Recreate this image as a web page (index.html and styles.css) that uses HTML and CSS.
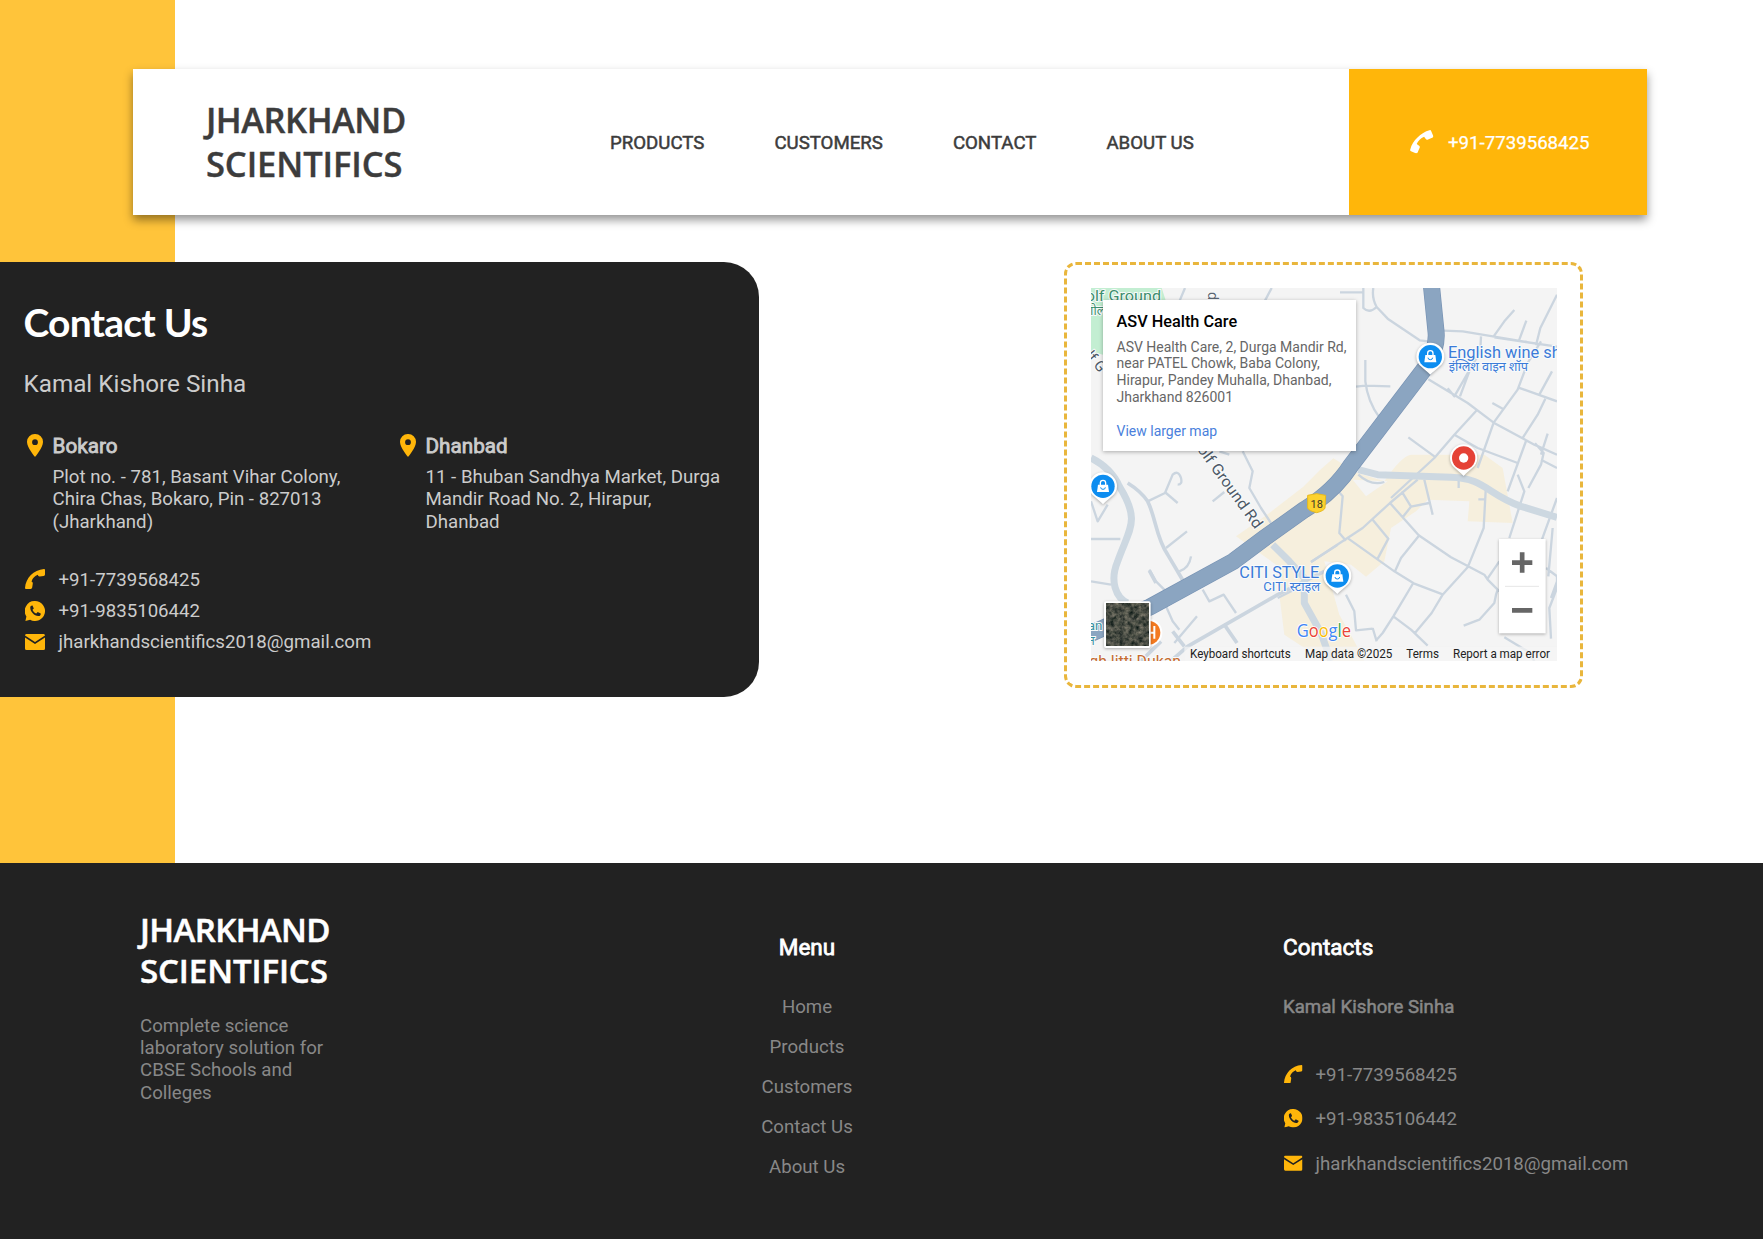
FILE: index.html
```html
<!DOCTYPE html>
<html lang="en">
<head>
<meta charset="utf-8">
<title>Jharkhand Scientifics - Contact Us</title>
<link rel="stylesheet" href="styles.css">
</head>
<body>
<svg class="sprite" aria-hidden="true">
  <symbol id="i-phone" viewBox="0 0 20 20"><path d="M20 .8V5.400Q20 6.800 18.600 7L14.600 7.500Q13 7.500 12.800 5.800C10 6.800 7.600 9 6.500 12.500Q8 12.800 7.800 14.600L7.200 18.600Q7 20 5.600 20H1Q0 20 0 19C.8 9 8.500.800 19 0Q20 0 20 .8Z"/></symbol>
  <symbol id="i-handset" viewBox="0 0 70 70"><path d="M58 1Q61-1 63 3L69 17Q71 21 66 23L52 29Q49 30 47 27L42 20C32 24 24 32 20 42L27 47Q30 49 29 52L23 66Q21 71 17 69L3 63Q-1 61 1 57C7 33 33 7 58 1Z"/></symbol>
  <symbol id="i-wa" viewBox="0 0 20 20"><path fill-rule="evenodd" d="M10 0a10 10 0 1 1-4.900 18.700L.4 20l1-4.500A10 10 0 0 1 10 0ZM5.300 6.200C4.800 10.500 9.500 15.400 13.700 15c1.300-.1 2.200-1.400 2-2.400l-3-1.500-1.400 1.500C9.500 11.900 8.100 10.500 7.500 8.800L8.800 7.500 7.500 4.600C6.500 4.300 5.400 5.200 5.300 6.200Z"/></symbol>
  <symbol id="i-mail" viewBox="0 0 20 16"><path d="M1.300 0H18.700Q20 0 20 1.600L10 8 0 1.600Q0 0 1.300 0ZM0 3.600 10 10 20 3.600V14.500Q20 16 18.500 16H1.500Q0 16 0 14.500Z"/></symbol>
  <symbol id="i-pin" viewBox="0 0 16 23"><path fill-rule="evenodd" d="M8 0a7.900 7.900 0 0 1 8 8c0 5.500-8 15-8 15S0 13.500 0 8a7.900 7.900 0 0 1 8-8Zm0 5.300a2.900 2.900 0 1 0 0 5.800 2.900 2.900 0 0 0 0-5.800Z"/></symbol>
</svg>

<div class="page">
  <header class="nav">
    <a class="nav-logo brand">JHARKHAND<br><span>SCIENTIFICS</span></a>
    <nav class="nav-links">
      <a>PRODUCTS</a><a>CUSTOMERS</a><a>CONTACT</a><a>ABOUT US</a>
    </nav>
    <a class="nav-call"><svg><use href="#i-handset"/></svg><span>+91-7739568425</span></a>
  </header>

  <main class="main">
    <section class="panel">
      <h1>Contact Us</h1>
      <p class="person">Kamal Kishore Sinha</p>
      <div class="offices">
        <div class="office">
          <svg><use href="#i-pin"/></svg>
          <div><h2>Bokaro</h2><p>Plot no. - 781, Basant Vihar Colony,<br>Chira Chas, Bokaro, Pin - 827013<br>(Jharkhand)</p></div>
        </div>
        <div class="office">
          <svg><use href="#i-pin"/></svg>
          <div><h2>Dhanbad</h2><p>11 - Bhuban Sandhya Market, Durga<br>Mandir Road No. 2, Hirapur,<br>Dhanbad</p></div>
        </div>
      </div>
      <ul class="reach">
        <li><svg><use href="#i-phone"/></svg><span>+91-7739568425</span></li>
        <li><svg><use href="#i-wa"/></svg><span>+91-9835106442</span></li>
        <li><svg><use href="#i-mail"/></svg><span>jharkhandscientifics2018@gmail.com</span></li>
      </ul>
    </section>

    <section class="map-frame">
      <div class="map">
        <svg class="tiles" viewBox="0 0 1398 1119">
          <defs>
            <filter id="sat" x="0" y="0" width="1" height="1" color-interpolation-filters="sRGB">
              <feTurbulence type="fractalNoise" baseFrequency=".07" numOctaves="4" seed="8"/>
              <feColorMatrix values=".6 .25 0 0 -.14  .52 .2 0 0 -.06  .45 .2 0 0 -.06  0 0 0 0 1"/>
            </filter>
            <g id="shop">
              <path fill="#fff" d="M0-42a42 42 0 0 1 42 42c0 27-25 34-42 54C-17 34-42 27-42 0A42 42 0 0 1 0-42Z" class="lift"/>
              <circle r="35" fill="#0d8df0"/>
              <path fill="#fff" d="M-15-5H15L18 17H-18Z"/>
              <path fill="none" stroke="#fff" stroke-width="4" d="M-8-4V-10a8 8 0 0 1 16 0V-4"/>
              <path fill="none" stroke="#0d8df0" stroke-width="3" d="M-7 3a7 6 0 0 0 14 0"/>
            </g>
          </defs>
          <rect width="1398" height="1119" fill="#f4f4f4"/>
          <path fill="#c3eed2" d="M0 0H212L225 40 36 130V200L0 190Z"/>
          <g fill="#f6efdd">
            <path d="M435 745 527 681 637 596 687 546 727 511 800 555 880 580Q930 505 960 500H1180L1235 540 1265 705 1130 700 1135 640 1010 635 975 670 900 720 880 820 825 866 780 830 700 820 745 980 790 1060 820 1119H700L580 1040 565 920 575 850 555 830Z"/>
          </g>
          <path fill="#f4f4f4" d="M785 575 890 580 825 625Z"/>
          <g class="road">
            <!-- north east -->
            <path d="M282 0 266 38M542 0 522 38M747 13H817M817 0V60Q835 78 857 57Q842 30 847 0M857 57 890 92 986 157 1012 160M1058 128 1115 130 1308 162M1210 148 1398 176M1398 20 1348 120 1335 172M1208 145 1240 100 1270 66M1283 160 1306 98M1170 145 1168 190 1090 325 1070 301M1135 250 1107 325M1012 274 1130 345 1208 404 1300 454 1330 470 1398 500M1208 404 1280 305 1310 225 1350 160M1204 345 1235 362M1280 298 1398 340M1345 320 1383 250M1295 450 1340 380 1363 332M1158 366 1090 440 1030 510 900 630M1090 440 1160 480 1280 525M1208 404 1160 540M1305 459 1250 610M1332 466 1358 495 1350 530 1312 600M1350 500 1370 437M1398 540 1350 515M795 296 823 293 898 295M823 216V280Q830 340 865 388M952 448 1030 505"/>
            <!-- east -->
            <path d="M660 822 815 720 897 645 980 575M742 610 755 625 745 735 765 758M772 752 910 850 968 886 1055 919M897 645 983 742 1080 808 1180 860 1190 875 1220 905 1260 935M932 610 960 656 1015 645 1020 645M933 690 960 656M1000 575 1025 680M1185 590 1178 720 1130 838 1055 920 1022 975 970 1037M1162 634H1182M1103 560V600M985 742 930 810 912 850M845 695 892 752 860 812M1280 560 1300 610 1255 750M1398 630 1340 790M1385 720 1372 865M1220 905 1215 920 1210 945 1165 995 1118 1013M1188 874 1225 820M965 888 907 985 875 1035 857 1055M907 985 960 1025 1010 1073M1365 840 1398 865 1398 900 1375 960 1380 1052M1240 1048 1310 1090 1330 1119M845 1020 857 1060M1398 880 1380 930M765 920 790 970 795 1027 845 1022"/>
            <!-- south and west -->
            <path d="M455 490 485 550 475 600 510 660 540 705M170 640 222 615 245 560Q262 545 270 570Q275 590 260 590M225 615 260 645M365 640 400 612M225 780 288 730M265 850Q295 840 300 805M175 845 195 880 225 910M335 905 355 940 398 920 435 975M225 955 245 1000 265 1025M0 640 20 700 50 650M0 753H88M0 880 60 890M250 1065 318 985M385 490 415 500M660 822 740 770M620 900 560 930"/>
            <path class="mid" d="M110 585Q150 610 170 640C195 690 195 750 230 800L275 876M240 1119 290 1075 560 920 700 850M245 1030 280 1075M400 1010 438 1065M175 848 195 885M150 1119 210 1060"/>
            <path class="big" d="M0 510Q60 540 85 595C150 700 115 720 80 820C55 880 75 930 110 945M545 770 595 820 640 870V945L690 1035 720 1119M802 545 860 560 1080 568C1180 570 1190 620 1290 655L1398 688"/>
            <path d="M802 560Q840 595 880 582"/>
          </g>
          <path fill="none" stroke="#7893b4" stroke-width="51" d="M1021-10 1035 130Q1040 175 1010 230L780 532Q730 610 640 665L522 749 427 820 177 957-30 1050"/>
          <path fill="none" stroke="#8ba5c1" stroke-width="47" d="M1021-10 1035 130Q1040 175 1010 230L780 532Q730 610 640 665L522 749 427 820 177 957-30 1050"/>

          <g class="lbl">
            <text x="-16" y="38" font-size="46" fill="#3c8f6d" textLength="226" lengthAdjust="spacingAndGlyphs">olf Ground</text>
            <text x="-14" y="80" font-size="38" fill="#3c8f6d">गोल्फ</text>
            <text transform="translate(351 12) rotate(90)" font-size="42" fill="#5c6672">d</text>
            <text transform="translate(-18 204) rotate(50)" font-size="44" fill="#4c5866">lf G</text>
            <text transform="translate(317 484) rotate(54)" font-size="46" fill="#4c5866" textLength="298" lengthAdjust="spacingAndGlyphs">olf Ground Rd</text>
            <text x="1071" y="211" font-size="49" fill="#3b7bd8" textLength="338" lengthAdjust="spacingAndGlyphs">English wine sh</text>
            <text x="1073" y="250" font-size="36" fill="#3b7bd8" textLength="238" lengthAdjust="spacingAndGlyphs">इंग्लिश वाइन शॉप</text>
            <text x="445" y="870" font-size="49" fill="#3b7bd8" textLength="240" lengthAdjust="spacingAndGlyphs">CITI STYLE</text>
            <text x="517" y="910" font-size="38" fill="#3b7bd8" textLength="170" lengthAdjust="spacingAndGlyphs">CITI स्टाइल</text>
            <text x="-10" y="1026" font-size="40" fill="#3a91a0">an</text>
            <text x="-10" y="1072" font-size="38" fill="#3a91a0">न</text>
            <text x="-5" y="1137" font-size="48" fill="#c66a2f" textLength="275" lengthAdjust="spacingAndGlyphs">gh litti Dukan</text>
          </g>

          <path fill="#fdd22e" stroke="#e7b91e" stroke-width="3" d="M650 622 677 617 704 622 702 660Q700 668 677 674Q652 668 650 660Z"/>
          <text x="677" y="659" font-size="33" text-anchor="middle" fill="#3d3a28">18</text>
          <use href="#shop" x="1018" y="206"/>
          <use href="#shop" x="36" y="595"/>
          <use href="#shop" x="739" y="864"/>
          <g transform="translate(1118 510)">
            <path fill="#fff" class="lift" d="M0-41a41 41 0 0 1 41 41c0 27-25 34-41 54C-17 34-41 27-41 0A41 41 0 0 1 0-41Z"/>
            <circle r="35" fill="#e54236"/><circle r="14" fill="#fff"/>
          </g>
          <circle cx="172" cy="1034" r="42" fill="#fff"/><circle cx="172" cy="1034" r="36" fill="#f47a20"/>
          <path fill="none" stroke="#fff" stroke-width="6" d="M190 1014V1052M178 1034H192"/>

          <text x="617" y="1048" class="google" textLength="163" lengthAdjust="spacingAndGlyphs"><tspan fill="#4285f4">G</tspan><tspan fill="#ea4335">o</tspan><tspan fill="#fbbc05">o</tspan><tspan fill="#4285f4">g</tspan><tspan fill="#34a853">l</tspan><tspan fill="#ea4335">e</tspan></text>
          <rect x="280" y="1076" width="1118" height="43" fill="#f5f5f5" opacity=".7"/>
          <g class="legal">
            <text x="297" y="1109" textLength="302" lengthAdjust="spacingAndGlyphs">Keyboard shortcuts</text>
            <text x="642" y="1109" textLength="262" lengthAdjust="spacingAndGlyphs">Map data ©2025</text>
            <text x="946" y="1109" textLength="98" lengthAdjust="spacingAndGlyphs">Terms</text>
            <text x="1086" y="1109" textLength="291" lengthAdjust="spacingAndGlyphs">Report a map error</text>
          </g>
          <g class="lift">
            <rect x="39" y="940" width="140" height="140" rx="6" fill="#fff"/>
            <rect x="45" y="946" width="128" height="128" filter="url(#sat)"/>
          </g>
          <g class="lift"><rect x="1224" y="753" width="140" height="283" fill="#fff"/></g>
          <path stroke="#e6e6e6" stroke-width="3" d="M1242 895H1344"/>
          <path stroke="#666" stroke-width="14" d="M1263 824H1324M1293.500 793V854M1263 967H1324"/>
        </svg>
        <div class="place">
          <h3>ASV Health Care</h3>
          <p>ASV Health Care, 2, Durga Mandir Rd,<br>near PATEL Chowk, Baba Colony,<br>Hirapur, Pandey Muhalla, Dhanbad,<br>Jharkhand 826001</p>
          <a>View larger map</a>
        </div>
      </div>
    </section>
  </main>

  <footer class="footer">
    <div class="about">
      <div class="brand foot-logo">JHARKHAND<br><span>SCIENTIFICS</span></div>
      <p>Complete science<br>laboratory solution for<br>CBSE Schools and<br>Colleges</p>
    </div>
    <div class="menu">
      <h4>Menu</h4>
      <a>Home</a><a>Products</a><a>Customers</a><a>Contact Us</a><a>About Us</a>
    </div>
    <div class="contacts">
      <h4>Contacts</h4>
      <p>Kamal Kishore Sinha</p>
      <ul class="reach">
        <li><svg><use href="#i-phone"/></svg><span>+91-7739568425</span></li>
        <li><svg><use href="#i-wa"/></svg><span>+91-9835106442</span></li>
        <li><svg><use href="#i-mail"/></svg><span>jharkhandscientifics2018@gmail.com</span></li>
      </ul>
    </div>
  </footer>
</div>
</body>
</html>
```
FILE: styles.css
```css
* { box-sizing: border-box; margin: 0; padding: 0; }
body {
  font: 18.67px/22.4px Roboto, "Liberation Sans", sans-serif;
  background: #fff;
  color: #3c3c3c;
}
ul { list-style: none; }
.sprite { display: block; width: 0; height: 0; }
.page {
  height: 1239px;
  overflow: hidden;
  display: flex;
  flex-direction: column;
  background: linear-gradient(90deg, #ffc43a 175px, #fff 175px);
}
.brand {
  font-family: "Open Sans", "Noto Sans", sans-serif;
  font-weight: 600;
}
.brand span { letter-spacing: -.1px; }

.nav {
  margin: 69px 116px 0 133px;
  height: 146px;
  display: flex;
  align-items: center;
  background: #fff;
  box-shadow: 0 5px 9px rgba(0, 0, 0, .42);
  flex: none;
}
.nav-logo {
  width: 404px;
  margin-left: 73px;
  font-size: 34.500px;
  line-height: 44px;
  letter-spacing: -.5px;
  -webkit-text-stroke: .4px;
}
.nav-links { display: flex; gap: 70px; padding-top: 2px; -webkit-text-stroke: .5px; }
.nav-call {
  margin-left: auto;
  width: 298px;
  height: 100%;
  padding-left: 61px;
  display: flex;
  align-items: center;
  gap: 15.500px;
  background: #ffb60a;
  color: #fff;
  -webkit-text-stroke: .25px;
}
.nav-call svg { width: 23.500px; height: 23.500px; fill: #fff; overflow: visible; -webkit-text-stroke: 0; }
.nav-call span { padding-top: 2px; margin-left: -1px; }

.main { display: flex; justify-content: space-between; align-items: flex-start; padding-top: 47px; height: 647.500px; flex: none; }
.panel {
  width: 759px;
  height: 434.500px;
  padding: 36px 0 0 23.500px;
  background: #222;
  color: #ccc;
  border-radius: 0 35px 35px 0;
}
.panel h1 { font: 700 39px/48px Lato, "Open Sans", sans-serif; letter-spacing: -.8px; color: #fff; }
.person { margin-top: 23px; font-size: 24.250px; line-height: 30px; }
.offices { display: flex; margin-top: 34px; }
.office { display: flex; width: 373px; padding-left: 3px; gap: 10px; flex: none; }
.office svg { width: 16px; height: 23px; fill: #ffb60a; margin-top: 1px; flex: none; }
.office h2 { font-size: 20.700px; font-weight: 400; line-height: 26px; -webkit-text-stroke: .8px; margin-bottom: 7px; }
.office p { line-height: 22.400px; }
.reach li { display: flex; align-items: center; }
.reach svg { width: 20px; height: 20px; fill: #ffb60a; }
.reach span { padding-top: 2px; }
.panel .reach { margin-top: 30.500px; }
.panel .reach li { height: 31.200px; gap: 14px; padding-left: 1px; }

.map-frame {
  margin-right: 180px;
  width: 519px;
  height: 426px;
  padding: 23px 24px;
  border: 3px dashed #e9b63c;
  border-radius: 12px;
}
.map { position: relative; width: 466px; height: 373px; overflow: hidden; }
.tiles { display: block; width: 466px; height: 373px; }
.road path { fill: none; stroke: #cbd5df; stroke-width: 7; stroke-linejoin: round; }
.road .mid { stroke-width: 11; }
.road .big { stroke-width: 21; stroke: #cdd8e1; }
.lift { filter: drop-shadow(0 3px 4px rgba(0, 0, 0, .3)); }
.lbl text { paint-order: stroke; stroke: #f8fafb; stroke-width: 6px; font-family: Roboto, "Noto Sans", sans-serif; }
.google { font-family: "Open Sans", sans-serif; font-size: 54px; font-weight: 500; paint-order: stroke; stroke: #fff; stroke-width: 5px; }
.legal text { font-size: 36px; fill: #222; }
.place {
  position: absolute;
  left: 12px;
  top: 12px;
  width: 253px;
  height: 151px;
  padding: 12px 0 0 13.500px;
  background: #fff;
  box-shadow: 0 1px 4px rgba(0, 0, 0, .3);
  font-size: 14px;
  line-height: 16.800px;
  color: #666;
  white-space: nowrap;
}
.place h3 { font-size: 16.300px; font-weight: 500; line-height: 20px; color: #000; margin-bottom: 6.500px; }
.place a { display: block; margin-top: 17.500px; color: #4a7fdc; }

.footer { flex: 1; background: #222; color: #888; display: flex; }
.about { width: 540px; padding: 46px 0 0 140px; }
.foot-logo { color: #fff; font-size: 33px; line-height: 41.300px; letter-spacing: -.6px; -webkit-text-stroke: .5px; }
.about p { margin-top: 23.500px; line-height: 22.400px; }
.menu { width: 534px; padding-top: 71px; display: flex; flex-direction: column; align-items: center; }
h4 { font-size: 22.500px; font-weight: 400; line-height: 26px; color: #fff; -webkit-text-stroke: .8px; }
.menu h4 { margin-bottom: 27.500px; }
.menu a { line-height: 40px; }
.contacts { padding: 71px 0 0 209px; }
.contacts p { margin: 36px 0 33.500px; -webkit-text-stroke: .5px; }
.contacts .reach li { height: 44.700px; gap: 13px; }
.contacts .reach svg { width: 18.500px; height: 18.500px; margin-left: 1px; }
```
